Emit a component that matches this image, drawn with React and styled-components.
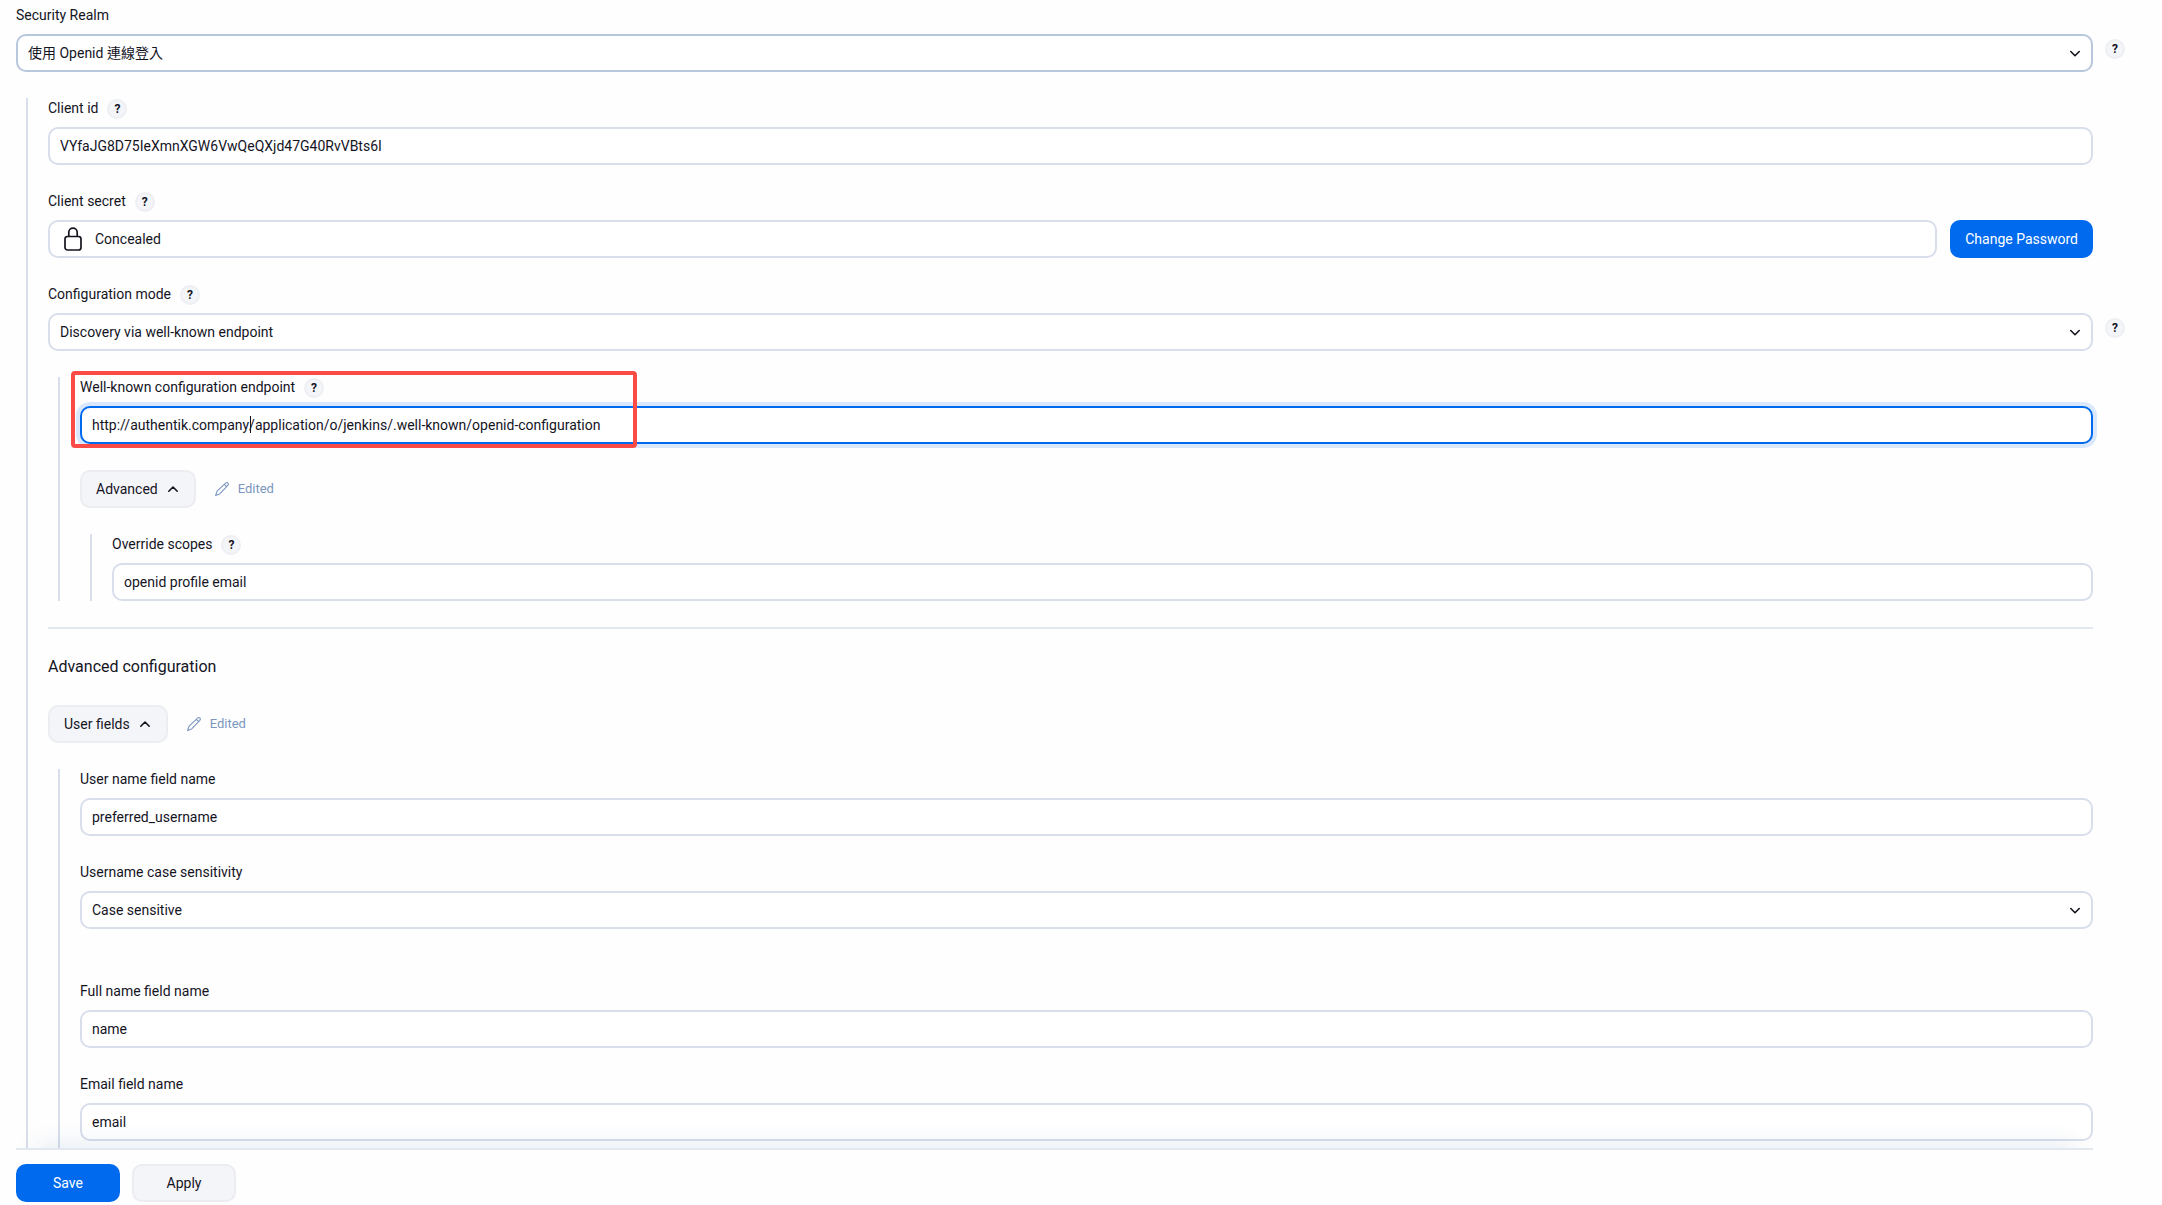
import React from 'react';
import styled, { createGlobalStyle, css } from 'styled-components';

const GlobalStyle = createGlobalStyle`
  *, *::before, *::after {
    box-sizing: border-box;
  }
  body {
    margin: 0;
    background: #fefefe;
    color: #14141f;
    font-family: Roboto, "Noto Sans CJK TC", sans-serif;
    font-size: 14px;
    line-height: 20px;
  }
`;

const Page = styled.div`
  display: flex;
  flex-direction: column;
  height: 100vh;
  padding: 0 69px 0 16px;
`;

/* The negative margin keeps the help buttons at the right inside the scroll area */
const Scroller = styled.main`
  flex: 1;
  min-height: 0;
  margin: 0 -69px 0 -16px;
  padding: 5px 69px 0 16px;
  overflow-y: auto;
  scrollbar-width: none;
`;

const Form = styled.form`
  display: flex;
  flex-direction: column;
  gap: 26px;
`;

const Nested = styled.div`
  display: flex;
  flex-direction: column;
  gap: 26px;
  margin-left: 10px;
  padding-left: 20px;
  border-left: 2px solid #d8deeb;
`;

const Item = styled.div`
  position: relative;
`;

const LabelRow = styled.div`
  display: flex;
  align-items: flex-end;
  gap: 9px;
  height: 21px;
  margin-bottom: 8px;
`;

const Label = styled.label`
  align-self: flex-start;
`;

const HelpButton = styled.button`
  flex: none;
  width: 20px;
  height: 20px;
  padding: 0;
  border: 2px solid #eeeff3;
  border-radius: 50%;
  background: #f4f5f9;
  color: #14141f;
  font: inherit;
  font-size: 12px;
  font-weight: 700;
  line-height: 16px;
  text-align: center;
`;

const SideHelp = styled(HelpButton)`
  position: absolute;
  top: 34px;
  left: calc(100% + 12px);
`;

const control = css`
  display: block;
  width: 100%;
  height: 38px;
  padding: 0 10px;
  border: 2px solid ${(p) => (p.$hovered ? '#b8c7dc' : '#d8deeb')};
  border-radius: 10px;
  background: #fff;
  color: #14141f;
  font: inherit;
  outline: none;
`;

const Input = styled.input`
  ${control}
  ${(p) =>
    p.$focused &&
    css`
      border-color: #006aee;
      box-shadow: 0 0 0 4px #d9e8fc;
    `}
`;

const Select = styled.select`
  ${control}
  appearance: none;
`;

const SelectWrap = styled.div`
  display: grid;
  align-items: center;

  & > * {
    grid-area: 1 / 1;
  }

  & > svg {
    justify-self: end;
    margin-right: 11px;
    pointer-events: none;
  }
`;

const SecretRow = styled.div`
  display: flex;
  gap: 13px;
`;

const Concealed = styled.div`
  ${control}
  display: flex;
  flex: 1;
  align-items: center;
  gap: 10px;
`;

const Button = styled.button`
  display: inline-flex;
  align-items: center;
  justify-content: center;
  gap: 8px;
  height: 38px;
  min-width: ${(p) => (p.$wide ? '104px' : '0')};
  padding: 0 ${(p) => (p.$primary ? '13px' : '14px')};
  border: 2px solid ${(p) => (p.$primary ? '#006aee' : '#ecedf1')};
  border-radius: 10px;
  background: ${(p) => (p.$primary ? '#006aee' : '#f4f5f9')};
  color: ${(p) => (p.$primary ? '#fff' : '#14141f')};
  font: inherit;
  white-space: nowrap;
`;

const ToggleRow = styled.div`
  display: flex;
  align-items: center;
  gap: 18px;
`;

const Edited = styled.span`
  display: flex;
  align-items: center;
  gap: 8px;
  color: #7b97bf;
  font-size: 13px;
`;

const Divider = styled.hr`
  width: 100%;
  height: 2px;
  margin: 0;
  border: 0;
  background: #e3e8ef;
`;

const SectionTitle = styled.h2`
  margin: 0;
  font-size: 16px;
  font-weight: 400;
  line-height: 24px;
`;

const Highlight = styled.div`
  position: absolute;
  top: -6px;
  left: -9px;
  width: 566px;
  height: 77px;
  border: 4px solid #fa4b46;
  border-radius: 4px;
  pointer-events: none;
`;

const Caret = styled.span`
  position: absolute;
  bottom: 11px;
  left: 170px;
  width: 1px;
  height: 17px;
  background: #14141f;
`;

const Footer = styled.footer`
  position: relative;
  display: flex;
  gap: 12px;
  padding: 14px 0 3px;
  border-top: 2px solid #e3e8ef;
  background: #fefefe;
  box-shadow: 0 -22px 24px -20px rgba(20, 70, 140, 0.12);
`;

const Chevron = ({ up }) => (
  <svg width="14" height="14" viewBox="0 0 14 14" fill="none" aria-hidden="true">
    <path
      d={up ? 'M2.8 9.2L7 5l4.2 4.2' : 'M2.8 5.5L7 9.7 11.2 5.5'}
      stroke="#14141f"
      strokeWidth="1.6"
      strokeLinecap="round"
      strokeLinejoin="round"
    />
  </svg>
);

const Lock = () => (
  <svg width="25" height="26" viewBox="0 0 25 26" fill="none" stroke="#14141f" strokeWidth="1.7" aria-hidden="true">
    <rect x="5" y="10.5" width="16" height="13.5" rx="2.5" />
    <path d="M8.8 10.5V6.3a4.2 4.2 0 0 1 8.4 0v4.2" />
  </svg>
);

const Pencil = () => (
  <svg width="16" height="16" viewBox="0 0 16 16" fill="none" stroke="#7b97bf" strokeWidth="1.1" strokeLinecap="round" strokeLinejoin="round" aria-hidden="true">
    <path d="M1.6 14.4l1.5-4.2 8.5-8.1c.7-.7 1.7-.7 2.3-.1s.6 1.6-.1 2.3l-8.1 8.6zM10.3 3.4l2.3 2.3" />
  </svg>
);

const Help = () => (
  <HelpButton type="button" aria-label="Help">
    ?
  </HelpButton>
);

const Field = ({ id, label, help, children }) => (
  <Item>
    <LabelRow>
      <Label htmlFor={id}>{label}</Label>
      {help && <Help />}
    </LabelRow>
    {children}
  </Item>
);

const TextField = ({ id, label, help, value }) => (
  <Field id={id} label={label} help={help}>
    <Input id={id} type="text" defaultValue={value} spellCheck={false} />
  </Field>
);

const SelectField = ({ id, label, help, sideHelp, hovered, value }) => (
  <Field id={id} label={label} help={help}>
    <SelectWrap>
      <Select id={id} $hovered={hovered}>
        <option>{value}</option>
      </Select>
      <Chevron />
    </SelectWrap>
    {sideHelp && (
      <SideHelp type="button" aria-label="Help">
        ?
      </SideHelp>
    )}
  </Field>
);

const Toggle = ({ children }) => (
  <ToggleRow>
    <Button type="button" aria-expanded="true">
      {children}
      <Chevron up />
    </Button>
    <Edited>
      <Pencil />
      Edited
    </Edited>
  </ToggleRow>
);

const App = () => {
  return (
    <Page>
      <GlobalStyle />
      <Scroller>
        <Form id="security">
          <SelectField id="realm" label="Security Realm" value="使用 Openid 連線登入" sideHelp hovered />
          <Nested>
            <TextField id="clientId" label="Client id" help value="VYfaJG8D75IeXmnXGW6VwQeQXjd47G40RvVBts6I" />
            <Field id="changeSecret" label="Client secret" help>
              <SecretRow>
                <Concealed>
                  <Lock />
                  Concealed
                </Concealed>
                <Button id="changeSecret" type="button" $primary>
                  Change Password
                </Button>
              </SecretRow>
            </Field>
            <SelectField id="mode" label="Configuration mode" help sideHelp value="Discovery via well-known endpoint" />
            <Nested>
              <Field id="wellKnown" label="Well-known configuration endpoint" help>
                <Input
                  id="wellKnown"
                  type="text"
                  defaultValue="http://authentik.company/application/o/jenkins/.well-known/openid-configuration"
                  spellCheck={false}
                  $focused
                />
                <Caret />
                <Highlight />
              </Field>
              <Toggle>Advanced</Toggle>
              <Nested>
                <TextField id="scopes" label="Override scopes" help value="openid profile email" />
              </Nested>
            </Nested>
            <Divider />
            <SectionTitle>Advanced configuration</SectionTitle>
            <Toggle>User fields</Toggle>
            <Nested>
              <TextField id="userName" label="User name field name" value="preferred_username" />
              <SelectField id="caseSensitivity" label="Username case sensitivity" value="Case sensitive" />
              <div />
              <TextField id="fullName" label="Full name field name" value="name" />
              <TextField id="email" label="Email field name" value="email" />
              <div />
            </Nested>
          </Nested>
        </Form>
      </Scroller>
      <Footer>
        <Button type="submit" form="security" $primary $wide>
          Save
        </Button>
        <Button type="button" $wide>
          Apply
        </Button>
      </Footer>
    </Page>
  );
};

export default App;
